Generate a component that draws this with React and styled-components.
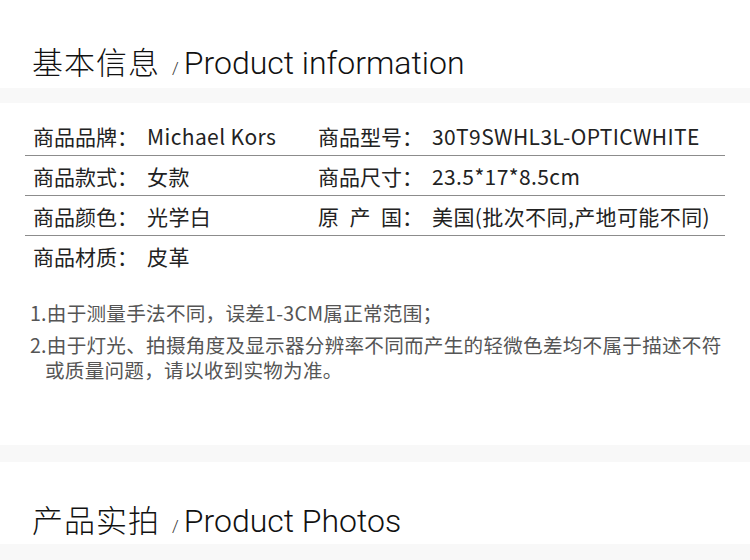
import React from "react"
import styled, { createGlobalStyle } from "styled-components"

const GlobalStyle = createGlobalStyle`
  body {
    margin: 0;
    background: #fff;
    font-family: "Noto Sans CJK SC", "Noto Sans", sans-serif;
    color: #222;
  }
`

const Page = styled.div`
  width: 750px;
  height: 560px;
  overflow: hidden;
`

const Heading = styled.h2`
  box-sizing: border-box;
  margin: 0;
  padding: ${props => props.top}px 32px 0;
  height: ${props => props.height}px;
  display: flex;
  align-items: baseline;
  font-weight: 300;
  line-height: 40px;
`

const HeadingCn = styled.span`
  font-size: 31px;
  font-weight: 300;
  color: #111;
  letter-spacing: 1px;
`

const Slash = styled.span`
  font-family: "Roboto", "Liberation Sans", sans-serif;
  font-size: 17px;
  font-weight: 300;
  margin: 0 5px 0 12px;
  color: #333;
`

const HeadingEn = styled.span`
  font-family: "Roboto", "Liberation Sans", sans-serif;
  font-size: 32px;
  font-weight: 300;
  color: #111;
`

const Band = styled.div`
  height: ${props => props.h}px;
  margin-top: ${props => props.gap || 0}px;
  background: #f8f8f8;
`

const Table = styled.div`
  margin: 13px 25px 0;
`

const Row = styled.div`
  display: grid;
  grid-template-columns: 285px 1fr;
  height: 39px;
  align-items: center;
  border-bottom: ${props => props.last ? "none" : "1px solid #8c8c8c"};
`

const Cell = styled.div`
  display: flex;
  align-items: center;
  padding: 1px 0 0 8px;
  font-size: 21px;
  color: #222;
  white-space: nowrap;
`

const Label = styled.span`
  width: 114px;
  flex: none;
`

const Value = styled.span`
  letter-spacing: 0.4px;
`

const Notes = styled.div`
  margin: 25px 25px 0 30px;
  font-size: 19.6px;
  letter-spacing: 0.25px;
  color: #555;
  line-height: 25px;
`

const Note = styled.p`
  margin: 0;
  padding-left: 15px;
  text-indent: -15px;
  & + & {
    margin-top: 7px;
  }
`

const rows = [
  [["商品品牌：", "Michael Kors"], ["商品型号：", "30T9SWHL3L-OPTICWHITE"]],
  [["商品款式：", "女款"], ["商品尺寸：", "23.5*17*8.5cm"]],
  [["商品颜色：", "光学白"], ["原\u2002产\u2002国：", "美国(批次不同,产地可能不同)"]],
  [["商品材质：", "皮革"]],
]

export default function App() {
  return (
    <Page>
      <GlobalStyle />
      <Heading top={41} height={88}>
        <HeadingCn>基本信息</HeadingCn>
        <Slash>/</Slash>
        <HeadingEn>Product information</HeadingEn>
      </Heading>
      <Band h={15} />
      <Table>
        {rows.map((row, i) => (
          <Row key={i} last={i === rows.length - 1}>
            {row.map(([label, value]) => (
              <Cell key={label}>
                <Label>{label}</Label>
                <Value>{value}</Value>
              </Cell>
            ))}
          </Row>
        ))}
      </Table>
      <Notes>
        <Note>1.由于测量手法不同，误差1-3CM属正常范围；</Note>
        <Note>2.由于灯光、拍摄角度及显示器分辨率不同而产生的轻微色差均不属于描述不符或质量问题，请以收到实物为准。</Note>
      </Notes>
      <Band h={17} gap={63} />
      <Heading top={37} height={82}>
        <HeadingCn>产品实拍</HeadingCn>
        <Slash>/</Slash>
        <HeadingEn>Product Photos</HeadingEn>
      </Heading>
      <Band h={20} />
    </Page>
  )
}
